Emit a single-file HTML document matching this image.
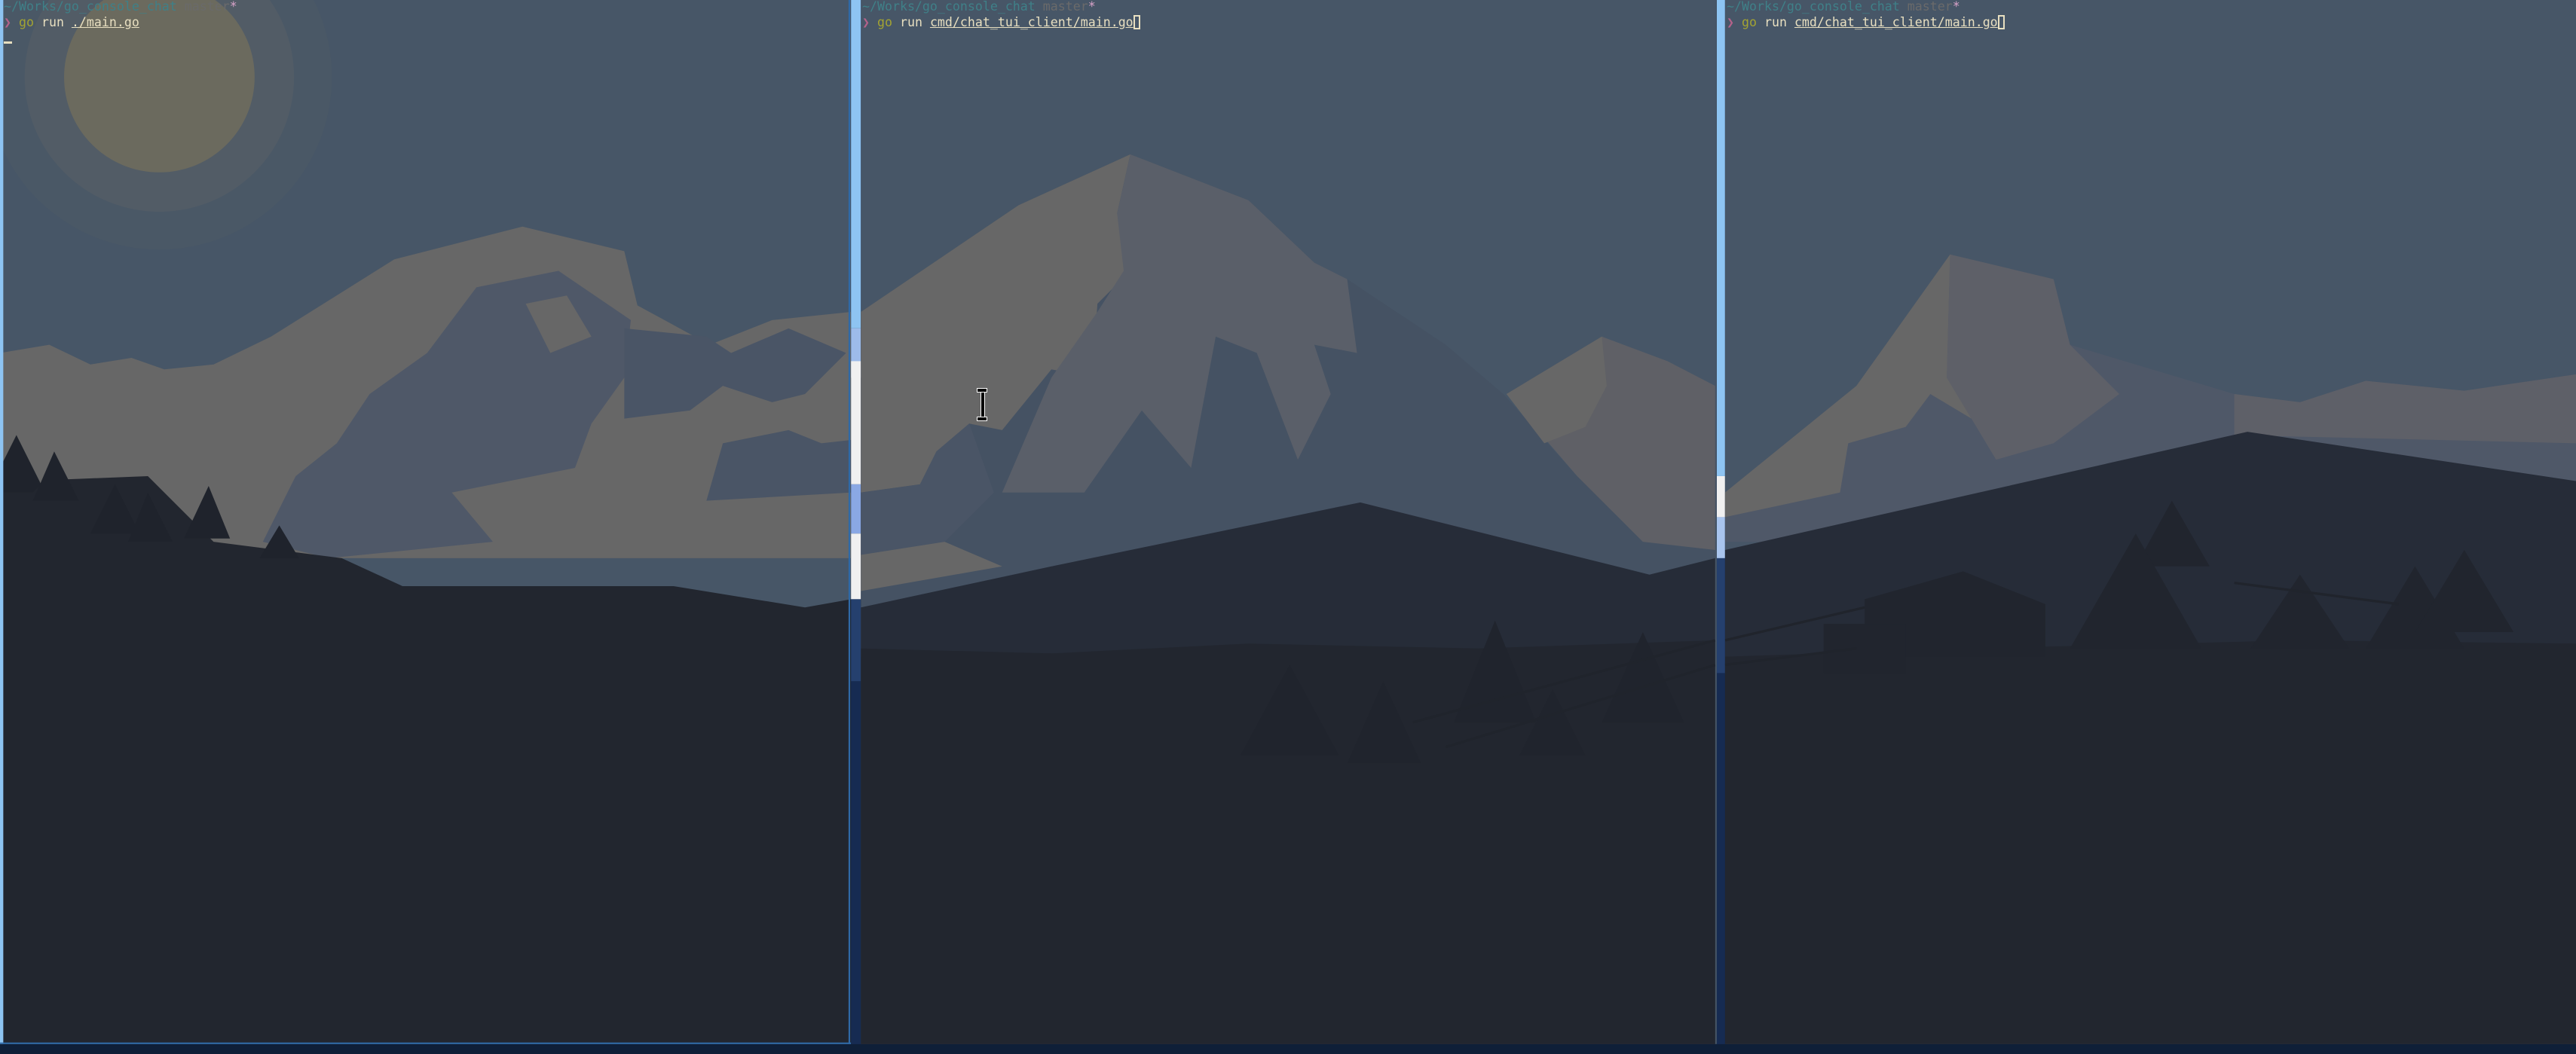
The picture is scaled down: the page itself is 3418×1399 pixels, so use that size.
<!DOCTYPE html>
<html><head><meta charset="utf-8">
<style>
html,body{margin:0;padding:0;background:#0f1f38;}
body{width:3418px;height:1399px;position:relative;overflow:hidden;}
svg.bg{position:absolute;left:0;top:0;}
.t{position:absolute;font-family:"DejaVu Sans Mono","Liberation Mono",monospace;font-size:16.6px;line-height:21px;white-space:pre;color:#e8dfc0;}
.p{color:#3f8088}.m{color:#6a6a6a}.s{color:#d9a3c9}.c{color:#b4628a}.g{color:#a3a332}
.u{text-decoration:underline;text-decoration-color:#e8dfc0;}
.cur{display:inline-block;width:9px;height:19px;border:2px solid #e8dfc0;box-sizing:border-box;vertical-align:-4px;}
.uc{position:absolute;width:11px;height:3px;background:#e8dfc0;}
</style></head><body>
<svg class="bg" width="3418" height="1399" viewBox="0 0 1568 642" preserveAspectRatio="none">
<rect x="0" y="0" width="1568" height="642" fill="#0f1f38"/>
<rect x="518" y="0" width="6" height="200" fill="#8ec4f2"/>
<rect x="518" y="200" width="6" height="30" fill="#9dbbea"/>
<rect x="518" y="220" width="6" height="75" fill="#f0f0f0"/>
<rect x="518" y="295" width="6" height="30" fill="#8aa8e4"/>
<rect x="518" y="325" width="6" height="40" fill="#f0f0f0"/>
<rect x="518" y="365" width="6" height="50" fill="#25406e"/>
<rect x="518" y="415" width="6" height="221" fill="#162b52"/>
<rect x="1045" y="0" width="5" height="290" fill="#8ec4f2"/>
<rect x="1045" y="290" width="5" height="25" fill="#f0f0f0"/>
<rect x="1045" y="315" width="5" height="25" fill="#a9c5ee"/>
<rect x="1045" y="340" width="5" height="70" fill="#25406e"/>
<rect x="1045" y="410" width="5" height="226" fill="#162b52"/>

<svg x="0" y="0" width="518" height="636" viewBox="0 0 518 636" overflow="hidden">
<rect width="518" height="636" fill="#475667"/>
<circle cx="97" cy="47" r="105" fill="#4a5866"/>
<circle cx="97" cy="47" r="82" fill="#525c66"/>
<circle cx="97" cy="47" r="58" fill="#6b6a5e"/>
<path d="M0 215 L30 210 L55 222 L80 218 L100 225 L130 222 L165 205 L240 158 L318 138 L380 153 L388 186 L432 210 L470 195 L518 190 L518 340 L0 340Z" fill="#676767"/>
<path d="M290 175 L340 165 L384 195 L380 230 L360 258 L350 285 L275 300 L300 330 L200 340 L160 330 L180 290 L205 270 L225 240 L260 215Z" fill="#4f5868"/>
<path d="M320 185 L345 180 L360 205 L335 215Z" fill="#676767"/>
<path d="M380 200 L430 205 L445 215 L480 200 L515 215 L490 240 L470 245 L440 235 L420 250 L380 255Z" fill="#4a5566"/>
<path d="M440 270 L480 262 L500 270 L518 268 L518 300 L430 305Z" fill="#4a5566"/>
<path d="M0 300 L40 292 L90 290 L130 330 L208 340 L245 357 L410 357 L490 370 L518 365 L518 636 L0 636Z" fill="#22262f"/>
<g fill="#1f232c">
<path d="M10 265 L25 295 L20 300 L0 300 L0 285Z"/><path d="M33 275 L48 305 L20 305Z"/><path d="M70 295 L85 325 L55 325Z"/><path d="M90 300 L105 330 L78 330Z"/><path d="M127 296 L140 328 L112 328Z"/><path d="M170 320 L182 340 L158 340Z"/>
</g>
<rect x="0" y="0" width="2" height="636" fill="#8ec4f2"/>
<rect x="516.5" y="0" width="1" height="636" fill="#2f6aa8"/>
<rect x="0" y="635" width="518" height="1" fill="#2f6aa8"/>
</svg>

<svg x="524" y="0" width="521" height="636" viewBox="524 0 521 636" overflow="hidden">
<rect x="524" width="521" height="636" fill="#475667"/>
<path d="M524 190 L620 125 L688 94 L760 122 L800 160 L820 170 L880 210 L915 240 L960 290 L1000 330 L1044 330 L1044 400 L524 400Z" fill="#455263"/>
<path d="M524 190 L620 125 L688 94 L680 130 L688 165 L668 185 L665 230 L640 225 L610 262 L590 258 L570 275 L560 295 L524 300Z" fill="#676767"/>
<path d="M688 94 L760 122 L800 160 L820 170 L826 215 L800 210 L810 240 L790 280 L765 215 L740 205 L725 285 L695 250 L660 300 L610 300 L640 230 L668 190 L684 165 L680 130Z" fill="#5a5f69"/>
<path d="M524 300 L560 295 L570 275 L590 258 L605 300 L575 330 L524 338Z" fill="#4a5566"/>
<path d="M524 338 L575 330 L610 345 L524 360Z" fill="#676767"/>
<path d="M917 240 L975 205 L1015 220 L1044 235 L1044 335 L1000 330 L960 290Z" fill="#5f6066"/>
<path d="M917 240 L975 205 L978 235 L965 260 L940 270Z" fill="#676767"/>
<path d="M524 370 L640 345 L828 306 L1004 350 L1044 340 L1044 636 L524 636Z" fill="#262c38"/>
<path d="M524 395 L640 398 L760 392 L900 395 L1044 390 L1044 636 L524 636Z" fill="#22262f"/>
<g fill="#20242d">
<path d="M785 405 L815 460 L755 460Z"/><path d="M842 415 L865 465 L820 465Z"/><path d="M910 378 L935 440 L885 440Z"/><path d="M1000 385 L1025 440 L975 440Z"/><path d="M945 420 L965 460 L925 460Z"/>
</g>
<path d="M860 440 L1044 390" stroke="#20242c" stroke-width="1.5" fill="none"/>
<path d="M880 455 L1044 405" stroke="#20242c" stroke-width="1.5" fill="none"/>
</svg>

<svg x="1050" y="0" width="518" height="636" viewBox="1050 0 518 636" overflow="hidden">
<rect x="1050" width="518" height="636" fill="#475667"/>
<path d="M1050 300 L1130 235 L1187 155 L1250 170 L1260 210 L1360 240 L1400 245 L1440 232 L1500 238 L1568 228 L1568 330 L1050 330Z" fill="#4f5868"/>
<path d="M1187 155 L1250 170 L1260 210 L1290 240 L1250 270 L1215 280 L1200 255 L1185 230Z" fill="#5e6068"/>
<path d="M1360 240 L1400 245 L1440 232 L1500 238 L1568 228 L1568 270 L1360 265Z" fill="#5e6068"/>
<path d="M1050 300 L1130 235 L1187 155 L1185 230 L1200 255 L1175 240 L1160 260 L1125 270 L1120 300 L1050 315Z" fill="#676767"/>
<path d="M1050 335 L1368 263 L1568 293 L1568 636 L1050 636Z" fill="#262c38"/>
<path d="M1050 400 L1200 395 L1400 390 L1568 392 L1568 636 L1050 636Z" fill="#22262f"/>
<g fill="#21252e">
<path d="M1322 305 L1345 345 L1300 345Z"/><path d="M1300 325 L1340 395 L1260 395Z"/><path d="M1470 345 L1500 395 L1440 395Z"/><path d="M1500 335 L1530 385 L1470 385Z"/><path d="M1400 350 L1430 395 L1370 395Z"/>
<path d="M1135 365 L1195 348 L1245 368 L1245 400 L1135 400Z"/>
<rect x="1110" y="380" width="50" height="30"/>
</g>
<path d="M1050 390 L1135 370 M1050 405 L1130 395 M1360 355 L1460 368" stroke="#20242c" stroke-width="1.5" fill="none"/>
</svg>
</svg>

<div class="t" style="left:5px;top:-2px"><span class="p">~/Works/go_console_chat</span> <span class="m">master</span><span class="s">*</span>
<span class="c">❯</span> <span class="g">go</span> run <span class="u">./main.go</span></div>
<div class="uc" style="left:5px;top:55px"></div>

<div class="t" style="left:1144px;top:-2px"><span class="p">~/Works/go_console_chat</span> <span class="m">master</span><span class="s">*</span>
<span class="c">❯</span> <span class="g">go</span> run <span class="u">cmd/chat_tui_client/main.go</span><span class="cur"></span></div>

<div class="t" style="left:2291px;top:-2px"><span class="p">~/Works/go_console_chat</span> <span class="m">master</span><span class="s">*</span>
<span class="c">❯</span> <span class="g">go</span> run <span class="u">cmd/chat_tui_client/main.go</span><span class="cur"></span></div>

<div style="position:absolute;left:1295px;top:515px;width:16px;height:44px;">
<div style="position:absolute;left:6px;top:3px;width:4px;height:38px;background:#000;border:1px solid #fff;"></div>
<div style="position:absolute;left:1px;top:0;width:12px;height:4px;background:#000;border:1px solid #fff;"></div>
<div style="position:absolute;left:1px;top:38px;width:12px;height:4px;background:#000;border:1px solid #fff;"></div>
</div>
</body></html>
